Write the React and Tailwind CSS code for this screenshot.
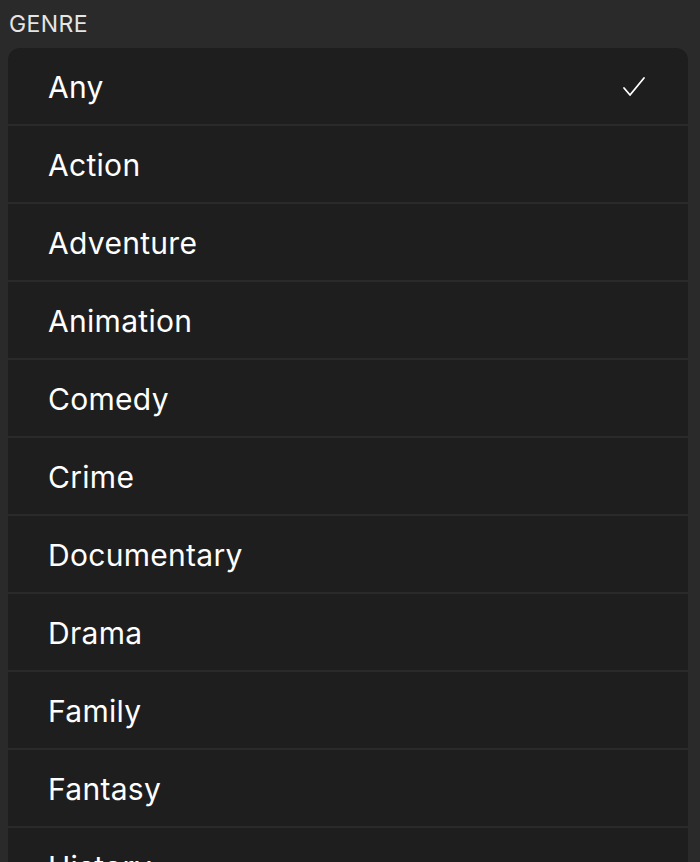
import React from "react";

const items = ["Any","Action","Adventure","Animation","Comedy","Crime","Documentary","Drama","Family","Fantasy","History"];

export default function App() {
  return (
    <div className="w-[700px] h-[862px] overflow-hidden bg-[#2a2a2a] text-white" style={{fontFamily: "Inter, 'Noto Sans', sans-serif"}}>
      <div className="pl-[9px] pt-[10px] h-[48px] text-[23px] leading-[28px] tracking-[0.4px] text-[#e5e5e5]">GENRE</div>
      <div className="ml-[8px] w-[680px] rounded-t-[12px] bg-[#1e1e1e] flex flex-col">
        {items.map((it, i) => (
          <div key={it} className="flex items-center shrink-0 h-[78px] pt-[2px] pl-[40px] pr-[42px] border-b-2 border-[#2a2a2a]">
            <span className="flex-1 text-[30px] leading-[36px] tracking-[0.3px]">{it}</span>
            {i === 0 && (
              <svg width="24" height="24" viewBox="0 0 24 24" fill="none" stroke="white" strokeWidth="1.8" strokeLinecap="round" strokeLinejoin="round">
                <path d="M2 13 L8 20 L22 3" />
              </svg>
            )}
          </div>
        ))}
      </div>
    </div>
  );
}
